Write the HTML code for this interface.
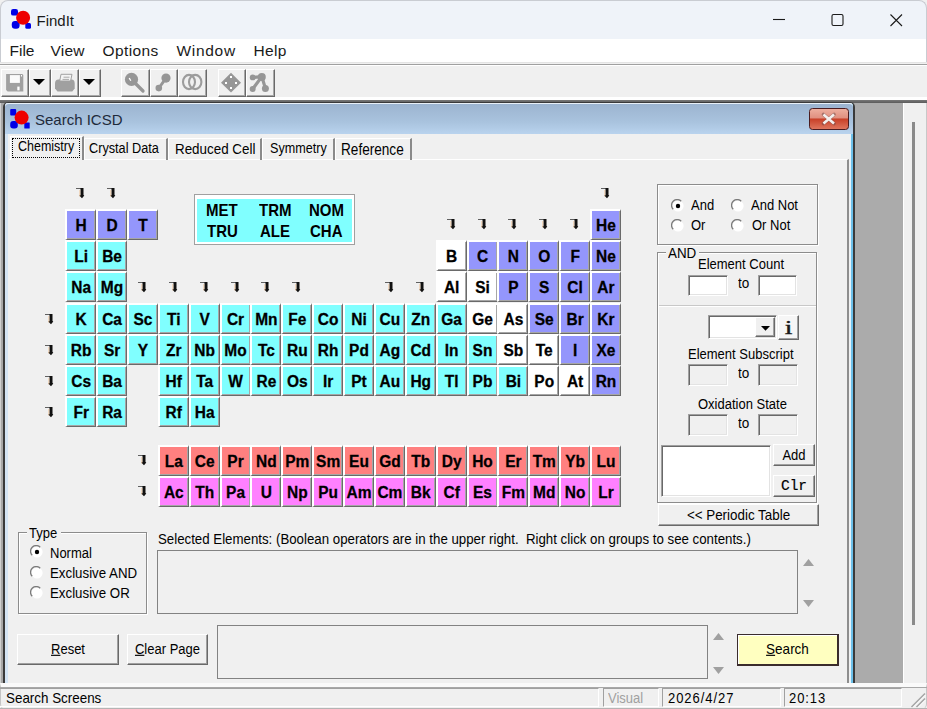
<!DOCTYPE html>
<html><head><meta charset="utf-8">
<style>
*{box-sizing:border-box;margin:0;padding:0}
html,body{width:927px;height:709px;overflow:hidden;background:#f0f0f0;font-family:"Liberation Sans",sans-serif;font-size:13px;color:#000}
.a{position:absolute}
.t{position:absolute;white-space:nowrap;line-height:1;transform:scaleY(1.15);transform-origin:0 55%}
/* title bar */
#title{left:0;top:0;width:927px;height:39px;background:#eff3f9;border-top-left-radius:8px;border-top-right-radius:8px;border:1px solid #c9ccd2;border-bottom:none}
#menu{left:0;top:39px;width:927px;height:23px;background:#fff;border-left:1px solid #c9ccd2;border-right:1px solid #c9ccd2}
.mi{position:absolute;top:42.5px;font-size:15.5px;line-height:1;color:#1a1a1a}
#tbar{left:0;top:62px;width:927px;height:40px;background:#f0f0f0}
.tb{position:absolute;top:69px;height:28px;border-top:1px solid #fff;border-left:1px solid #fff;border-right:1px solid #6a6a6a;border-bottom:1px solid #6a6a6a;box-shadow:inset -1px -1px 0 #a8a8a8}
/* mdi */
#mdi{left:0;top:103px;width:903px;height:580px;background:#ababab}
#rstrip{left:903px;top:103px;width:24px;height:580px;background:#f0f0f0;border-left:1px solid #fff;border-right:1px solid #c8c8c8}
#child{left:3px;top:102px;width:852px;height:600px;background:#f0f0f0;border:2px solid #3a3a3a;border-top-width:1px;border-top-left-radius:5px;border-top-right-radius:5px;border-bottom:none}
#child:before{content:"";position:absolute;left:0;top:0;right:0;bottom:0;border:3px solid #d4e4f4;border-bottom:none;border-right:2px solid #6cc0ea;box-shadow:inset -1px 0 0 #e4f2fa;border-top-left-radius:3px;border-top-right-radius:3px}
#ctitle{left:5px;top:103px;width:848px;height:31px;background:linear-gradient(#9cb4d0,#a9c3de 60%,#b9d3ee);border-top-left-radius:4px;border-top-right-radius:4px;border-top:1px solid #e8f0f8}
.tab{position:absolute;height:22px;top:138px;border-top:1px solid #fff;border-left:1px solid #fff;border-right:2px solid #8a8a8a}
#page{left:9px;top:159px;width:840px;height:530px;border-top:1px solid #fff;border-right:2px solid #8e8e8e}
.el{position:absolute;width:31px;height:31px;border-top:2px solid #fff;border-left:2px solid #fff;border-right:1px solid #6a6a6a;border-bottom:1px solid #6a6a6a;box-shadow:inset -1px -1px 0 #a6a6a6;font-weight:bold;font-size:15.5px;line-height:29px;text-align:center;color:#000}
.el span{display:inline-block;transform:scaleY(1.07);-webkit-text-stroke:0.25px #000}
.ar{position:absolute}
.grp{position:absolute;border:1px solid #8c8c8c;box-shadow:inset 1px 1px 0 #fff,1px 1px 0 #fff}
.sunk{position:absolute;background:#fff;border-top:1px solid #a0a0a0;border-left:1px solid #a0a0a0;border-right:1px solid #fff;border-bottom:1px solid #fff;box-shadow:inset 1px 1px 0 #696969,inset -1px -1px 0 #e3e3e3}
.dis{background:#f0f0f0}
.btn{position:absolute;border-top:1px solid #fff;border-left:1px solid #fff;border-right:1px solid #696969;border-bottom:1px solid #696969;box-shadow:inset -1px -1px 0 #a0a0a0;text-align:center;background:#f0f0f0}
.rad{position:absolute;width:13px;height:13px}
.bt{display:inline-block;transform:scaleY(1.15)}
.sp{position:absolute;border-top:1px solid #a0a0a0;border-left:1px solid #a0a0a0;border-right:1px solid #fff;border-bottom:1px solid #fff}
</style></head><body>
<!-- title bar -->
<div id="title" class="a"></div>
<svg class="a" style="left:10px;top:9px" width="22" height="21" viewBox="0 0 22 21">
<rect x="1" y="0" width="7" height="6.6" rx="2.2" fill="#0000e6"/><rect x="1.8" y="12" width="7.8" height="7.7" rx="3.2" fill="#0000e6"/><rect x="15.3" y="14" width="5.7" height="5.7" rx="1.5" fill="#0000e6"/><circle cx="13.1" cy="8.8" r="7" fill="#ee0000"/></svg>
<div class="t" style="left:36.5px;top:13px;font-size:15px;color:#1a1a1a;transform:none">FindIt</div>
<svg class="a" style="left:770px;top:12px" width="140" height="16" viewBox="0 0 140 16">
<path d="M3 7.5H15" stroke="#1a1a1a" stroke-width="1.1"/>
<rect x="62" y="2.5" width="11" height="11" rx="1.5" fill="none" stroke="#1a1a1a" stroke-width="1.1"/>
<path d="M120.5 2.5L132 14M132 2.5L120.5 14" stroke="#1a1a1a" stroke-width="1.1"/></svg>
<!-- menu -->
<div id="menu" class="a"></div>
<div class="mi" style="left:9.5px">File</div>
<div class="mi" style="left:50.5px;letter-spacing:0.2px">View</div>
<div class="mi" style="left:102.5px;letter-spacing:0.4px">Options</div>
<div class="mi" style="left:176.5px;letter-spacing:0.7px">Window</div>
<div class="mi" style="left:253.5px;letter-spacing:0.3px">Help</div>
<!-- toolbar -->
<div id="tbar" class="a"></div>
<div class="a" style="left:0;top:62px;width:927px;height:1px;background:#e4e4e4"></div>
<div class="a" style="left:0;top:64px;width:927px;height:1px;background:#a0a0a0"></div>
<div class="a" style="left:0;top:65px;width:927px;height:1px;background:#fff"></div>
<div class="tb" style="left:1px;width:28px"></div>
<div class="tb" style="left:29px;width:22px"></div>
<div class="tb" style="left:51px;width:28px"></div>
<div class="tb" style="left:79px;width:22px"></div>
<div class="tb" style="left:121px;width:29px"></div>
<div class="tb" style="left:150px;width:28px"></div>
<div class="tb" style="left:178px;width:29px"></div>
<div class="tb" style="left:217.5px;width:28px"></div>
<div class="tb" style="left:246px;width:29px"></div>
<svg class="a" style="left:0;top:66px" width="290" height="32" viewBox="0 66 290 32">
<!-- floppy -->
<path d="M6.1 74H22.3L23.3 75V91.4H7.6L6.1 89.9Z" fill="#a0a0a0"/><rect x="9.9" y="75.1" width="10" height="7.8" fill="#fafafa"/><rect x="17.3" y="86.6" width="2.3" height="3.8" fill="#fff"/><rect x="21" y="75" width="1" height="1.5" fill="#fff"/>
<path d="M33 79H45L39 85Z" fill="#000"/>
<!-- printer -->
<path d="M55 83.5Q55 79.6 58.5 79.6H71.5Q74.7 79.6 74.7 83.5V88.5L72.3 91.4H57.5L55 88.5Z" fill="#a0a0a0"/><path d="M61 74.3H72L70.6 81H59.7Z" fill="#f4f4f4" stroke="#a0a0a0" stroke-width="1"/><path d="M63.5 77.2H69.5M62.5 79.4H69" stroke="#a0a0a0" stroke-width="0.9"/>
<path d="M83 79H95L89 85Z" fill="#000"/>
<!-- magnifier -->
<circle cx="131.5" cy="79.4" r="6.6" fill="#969696"/><path d="M135.5 83.5L143 91" stroke="#969696" stroke-width="3.3" stroke-linecap="round"/><path d="M129.2 78L130.8 80.8" stroke="#fff" stroke-width="1.3"/>
<!-- bond -->
<circle cx="166" cy="78.1" r="4.6" fill="#969696"/><circle cx="158.8" cy="88.1" r="3.3" fill="#969696"/><path d="M158.8 88.1L166 78.1" stroke="#969696" stroke-width="2.8"/>
<!-- rings -->
<ellipse cx="189" cy="82" rx="6" ry="7.1" fill="none" stroke="#9c9c9c" stroke-width="2.1"/><ellipse cx="195.2" cy="82" rx="6.2" ry="7.1" fill="none" stroke="#9c9c9c" stroke-width="2.1"/>
<!-- diamond -->
<path d="M231 72.8L241 82.7L231 92.6L221 82.7Z" fill="#969696"/><rect x="230" y="76" width="2" height="2" fill="#fff"/><rect x="225" y="82" width="2" height="2" fill="#fff"/><rect x="235" y="82" width="2" height="2" fill="#fff"/><rect x="230" y="87" width="2" height="2" fill="#fff"/>
<!-- graph -->
<path d="M252.7 77.6L261.8 76.6L265.4 88.4M261.8 76.6L252.7 89" fill="none" stroke="#969696" stroke-width="3.2"/><circle cx="252.7" cy="77.4" r="2.9" fill="#969696"/><circle cx="261.8" cy="77" r="4" fill="#969696"/><circle cx="265.4" cy="88.4" r="3.5" fill="#969696"/><circle cx="252.7" cy="89" r="3" fill="#969696"/>
</svg>
<div class="a" style="left:0;top:97px;width:927px;height:3px;background:#fff"></div>
<div class="a" style="left:0;top:100px;width:927px;height:3px;background:linear-gradient(#787878,#5a5a5a)"></div>
<!-- MDI -->
<div id="mdi" class="a"></div>
<div id="rstrip" class="a"></div>
<div class="a" style="left:912px;top:122px;width:3px;height:503px;background:#8a8a8a"></div>
<div class="a" style="left:0;top:103px;width:3px;height:580px;background:#a8a8a8;border-left:1px solid #d0d0d0"></div>
<div id="child" class="a"></div>
<div id="ctitle" class="a"></div>
<svg class="a" style="left:10px;top:109px" width="21" height="21" viewBox="0 0 21 21">
<rect x="0.2" y="0" width="6" height="6.5" rx="1" fill="#0000e6"/><rect x="0.2" y="12" width="7.6" height="7.4" rx="3" fill="#0000e6"/><rect x="14.3" y="13.5" width="5.4" height="5.9" rx="0.5" fill="#0000e6"/><circle cx="11.6" cy="8.6" r="7" fill="#ee0000"/></svg>
<div class="t" style="left:35px;top:112px;font-size:15px;color:#1e2a3a;transform:none">Search ICSD</div>
<svg class="a" style="left:809px;top:108px" width="40" height="22" viewBox="0 0 40 22">
<defs><linearGradient id="cg" x1="0" y1="0" x2="0" y2="1"><stop offset="0" stop-color="#eeb0a0"/><stop offset="0.45" stop-color="#e09080"/><stop offset="0.5" stop-color="#c84028"/><stop offset="1" stop-color="#e07860"/></linearGradient></defs>
<rect x="0.5" y="0.5" width="39" height="21" rx="3" fill="url(#cg)" stroke="#4a1c20"/>
<path d="M14.5 6.5L25 15.5M25 6.5L14.5 15.5" stroke="#6a4a48" stroke-width="3.6" stroke-linecap="round" opacity="0.5"/><path d="M14.5 6.5L25 15.5M25 6.5L14.5 15.5" stroke="#f4f0ee" stroke-width="2.6"/></svg>
<!-- tab page -->
<div id="page" class="a"></div>
<div class="tab" style="left:10px;top:136px;height:24px;width:74px;background:#f0f0f0"></div>
<div class="a" style="left:12px;top:138px;width:68px;height:20px;border:1px dotted #000"></div>
<div class="t" style="left:18px;top:141px;font-size:12.5px">Chemistry</div>
<div class="tab" style="left:84px;width:84px"></div>
<div class="t" style="left:89px;top:143px;font-size:12.7px">Crystal Data</div>
<div class="tab" style="left:168px;width:94px"></div>
<div class="t" style="left:175px;top:142px;font-size:13.4px">Reduced Cell</div>
<div class="tab" style="left:262px;width:73px"></div>
<div class="t" style="left:270px;top:143px;font-size:12.6px">Symmetry</div>
<div class="tab" style="left:335px;width:77px"></div>
<div class="t" style="left:341px;top:142.5px;font-size:13.6px">Reference</div>

<div class="el" style="left:65.2px;top:209.0px;background:#9496fc"><span>H</span></div>
<div class="el" style="left:96.07px;top:209.0px;background:#9496fc"><span>D</span></div>
<div class="el" style="left:126.94px;top:209.0px;background:#9496fc"><span>T</span></div>
<div class="el" style="left:589.99px;top:209.0px;background:#9496fc"><span>He</span></div>
<div class="el" style="left:65.2px;top:240.23px;background:#80ffff"><span>Li</span></div>
<div class="el" style="left:96.07px;top:240.23px;background:#80ffff"><span>Be</span></div>
<div class="el" style="left:435.64px;top:240.23px;background:#ffffff"><span>B</span></div>
<div class="el" style="left:466.51px;top:240.23px;background:#9496fc"><span>C</span></div>
<div class="el" style="left:497.38px;top:240.23px;background:#9496fc"><span>N</span></div>
<div class="el" style="left:528.25px;top:240.23px;background:#9496fc"><span>O</span></div>
<div class="el" style="left:559.12px;top:240.23px;background:#9496fc"><span>F</span></div>
<div class="el" style="left:589.99px;top:240.23px;background:#9496fc"><span>Ne</span></div>
<div class="el" style="left:65.2px;top:271.46px;background:#80ffff"><span>Na</span></div>
<div class="el" style="left:96.07px;top:271.46px;background:#80ffff"><span>Mg</span></div>
<div class="el" style="left:435.64px;top:271.46px;background:#ffffff"><span>Al</span></div>
<div class="el" style="left:466.51px;top:271.46px;background:#ffffff"><span>Si</span></div>
<div class="el" style="left:497.38px;top:271.46px;background:#9496fc"><span>P</span></div>
<div class="el" style="left:528.25px;top:271.46px;background:#9496fc"><span>S</span></div>
<div class="el" style="left:559.12px;top:271.46px;background:#9496fc"><span>Cl</span></div>
<div class="el" style="left:589.99px;top:271.46px;background:#9496fc"><span>Ar</span></div>
<div class="el" style="left:65.2px;top:302.69px;background:#80ffff"><span>K</span></div>
<div class="el" style="left:96.07px;top:302.69px;background:#80ffff"><span>Ca</span></div>
<div class="el" style="left:126.94px;top:302.69px;background:#80ffff"><span>Sc</span></div>
<div class="el" style="left:157.81px;top:302.69px;background:#80ffff"><span>Ti</span></div>
<div class="el" style="left:188.68px;top:302.69px;background:#80ffff"><span>V</span></div>
<div class="el" style="left:219.55px;top:302.69px;background:#80ffff"><span>Cr</span></div>
<div class="el" style="left:250.42px;top:302.69px;background:#80ffff"><span>Mn</span></div>
<div class="el" style="left:281.29px;top:302.69px;background:#80ffff"><span>Fe</span></div>
<div class="el" style="left:312.16px;top:302.69px;background:#80ffff"><span>Co</span></div>
<div class="el" style="left:343.03px;top:302.69px;background:#80ffff"><span>Ni</span></div>
<div class="el" style="left:373.9px;top:302.69px;background:#80ffff"><span>Cu</span></div>
<div class="el" style="left:404.77px;top:302.69px;background:#80ffff"><span>Zn</span></div>
<div class="el" style="left:435.64px;top:302.69px;background:#80ffff"><span>Ga</span></div>
<div class="el" style="left:466.51px;top:302.69px;background:#ffffff"><span>Ge</span></div>
<div class="el" style="left:497.38px;top:302.69px;background:#ffffff"><span>As</span></div>
<div class="el" style="left:528.25px;top:302.69px;background:#9496fc"><span>Se</span></div>
<div class="el" style="left:559.12px;top:302.69px;background:#9496fc"><span>Br</span></div>
<div class="el" style="left:589.99px;top:302.69px;background:#9496fc"><span>Kr</span></div>
<div class="el" style="left:65.2px;top:333.92px;background:#80ffff"><span>Rb</span></div>
<div class="el" style="left:96.07px;top:333.92px;background:#80ffff"><span>Sr</span></div>
<div class="el" style="left:126.94px;top:333.92px;background:#80ffff"><span>Y</span></div>
<div class="el" style="left:157.81px;top:333.92px;background:#80ffff"><span>Zr</span></div>
<div class="el" style="left:188.68px;top:333.92px;background:#80ffff"><span>Nb</span></div>
<div class="el" style="left:219.55px;top:333.92px;background:#80ffff"><span>Mo</span></div>
<div class="el" style="left:250.42px;top:333.92px;background:#80ffff"><span>Tc</span></div>
<div class="el" style="left:281.29px;top:333.92px;background:#80ffff"><span>Ru</span></div>
<div class="el" style="left:312.16px;top:333.92px;background:#80ffff"><span>Rh</span></div>
<div class="el" style="left:343.03px;top:333.92px;background:#80ffff"><span>Pd</span></div>
<div class="el" style="left:373.9px;top:333.92px;background:#80ffff"><span>Ag</span></div>
<div class="el" style="left:404.77px;top:333.92px;background:#80ffff"><span>Cd</span></div>
<div class="el" style="left:435.64px;top:333.92px;background:#80ffff"><span>In</span></div>
<div class="el" style="left:466.51px;top:333.92px;background:#80ffff"><span>Sn</span></div>
<div class="el" style="left:497.38px;top:333.92px;background:#ffffff"><span>Sb</span></div>
<div class="el" style="left:528.25px;top:333.92px;background:#ffffff"><span>Te</span></div>
<div class="el" style="left:559.12px;top:333.92px;background:#9496fc"><span>I</span></div>
<div class="el" style="left:589.99px;top:333.92px;background:#9496fc"><span>Xe</span></div>
<div class="el" style="left:65.2px;top:365.15px;background:#80ffff"><span>Cs</span></div>
<div class="el" style="left:96.07px;top:365.15px;background:#80ffff"><span>Ba</span></div>
<div class="el" style="left:157.81px;top:365.15px;background:#80ffff"><span>Hf</span></div>
<div class="el" style="left:188.68px;top:365.15px;background:#80ffff"><span>Ta</span></div>
<div class="el" style="left:219.55px;top:365.15px;background:#80ffff"><span>W</span></div>
<div class="el" style="left:250.42px;top:365.15px;background:#80ffff"><span>Re</span></div>
<div class="el" style="left:281.29px;top:365.15px;background:#80ffff"><span>Os</span></div>
<div class="el" style="left:312.16px;top:365.15px;background:#80ffff"><span>Ir</span></div>
<div class="el" style="left:343.03px;top:365.15px;background:#80ffff"><span>Pt</span></div>
<div class="el" style="left:373.9px;top:365.15px;background:#80ffff"><span>Au</span></div>
<div class="el" style="left:404.77px;top:365.15px;background:#80ffff"><span>Hg</span></div>
<div class="el" style="left:435.64px;top:365.15px;background:#80ffff"><span>Tl</span></div>
<div class="el" style="left:466.51px;top:365.15px;background:#80ffff"><span>Pb</span></div>
<div class="el" style="left:497.38px;top:365.15px;background:#80ffff"><span>Bi</span></div>
<div class="el" style="left:528.25px;top:365.15px;background:#ffffff"><span>Po</span></div>
<div class="el" style="left:559.12px;top:365.15px;background:#ffffff"><span>At</span></div>
<div class="el" style="left:589.99px;top:365.15px;background:#9496fc"><span>Rn</span></div>
<div class="el" style="left:65.2px;top:396.38px;background:#80ffff"><span>Fr</span></div>
<div class="el" style="left:96.07px;top:396.38px;background:#80ffff"><span>Ra</span></div>
<div class="el" style="left:157.81px;top:396.38px;background:#80ffff"><span>Rf</span></div>
<div class="el" style="left:188.68px;top:396.38px;background:#80ffff"><span>Ha</span></div>
<div class="el" style="left:157.81px;top:444.6px;background:#ff8080"><span>La</span></div>
<div class="el" style="left:188.68px;top:444.6px;background:#ff8080"><span>Ce</span></div>
<div class="el" style="left:219.55px;top:444.6px;background:#ff8080"><span>Pr</span></div>
<div class="el" style="left:250.42px;top:444.6px;background:#ff8080"><span>Nd</span></div>
<div class="el" style="left:281.29px;top:444.6px;background:#ff8080"><span>Pm</span></div>
<div class="el" style="left:312.16px;top:444.6px;background:#ff8080"><span>Sm</span></div>
<div class="el" style="left:343.03px;top:444.6px;background:#ff8080"><span>Eu</span></div>
<div class="el" style="left:373.9px;top:444.6px;background:#ff8080"><span>Gd</span></div>
<div class="el" style="left:404.77px;top:444.6px;background:#ff8080"><span>Tb</span></div>
<div class="el" style="left:435.64px;top:444.6px;background:#ff8080"><span>Dy</span></div>
<div class="el" style="left:466.51px;top:444.6px;background:#ff8080"><span>Ho</span></div>
<div class="el" style="left:497.38px;top:444.6px;background:#ff8080"><span>Er</span></div>
<div class="el" style="left:528.25px;top:444.6px;background:#ff8080"><span>Tm</span></div>
<div class="el" style="left:559.12px;top:444.6px;background:#ff8080"><span>Yb</span></div>
<div class="el" style="left:589.99px;top:444.6px;background:#ff8080"><span>Lu</span></div>
<div class="el" style="left:157.81px;top:475.8px;background:#ff80ff"><span>Ac</span></div>
<div class="el" style="left:188.68px;top:475.8px;background:#ff80ff"><span>Th</span></div>
<div class="el" style="left:219.55px;top:475.8px;background:#ff80ff"><span>Pa</span></div>
<div class="el" style="left:250.42px;top:475.8px;background:#ff80ff"><span>U</span></div>
<div class="el" style="left:281.29px;top:475.8px;background:#ff80ff"><span>Np</span></div>
<div class="el" style="left:312.16px;top:475.8px;background:#ff80ff"><span>Pu</span></div>
<div class="el" style="left:343.03px;top:475.8px;background:#ff80ff"><span>Am</span></div>
<div class="el" style="left:373.9px;top:475.8px;background:#ff80ff"><span>Cm</span></div>
<div class="el" style="left:404.77px;top:475.8px;background:#ff80ff"><span>Bk</span></div>
<div class="el" style="left:435.64px;top:475.8px;background:#ff80ff"><span>Cf</span></div>
<div class="el" style="left:466.51px;top:475.8px;background:#ff80ff"><span>Es</span></div>
<div class="el" style="left:497.38px;top:475.8px;background:#ff80ff"><span>Fm</span></div>
<div class="el" style="left:528.25px;top:475.8px;background:#ff80ff"><span>Md</span></div>
<div class="el" style="left:559.12px;top:475.8px;background:#ff80ff"><span>No</span></div>
<div class="el" style="left:589.99px;top:475.8px;background:#ff80ff"><span>Lr</span></div>
<svg class="ar" style="left:75px;top:188px" width="10" height="11" viewBox="0 0 10 11"><path d="M1 0.5H8" stroke="#606060" stroke-width="1"/><path d="M5.5 0H8.5V7L9.3 7.6L7 10.3L4.2 7.6L5.5 7Z" fill="#111"/><path d="M4.8 2V8.5" stroke="#f0c090" stroke-width="1" opacity="0.7"/></svg>
<svg class="ar" style="left:106px;top:188px" width="10" height="11" viewBox="0 0 10 11"><path d="M1 0.5H8" stroke="#606060" stroke-width="1"/><path d="M5.5 0H8.5V7L9.3 7.6L7 10.3L4.2 7.6L5.5 7Z" fill="#111"/><path d="M4.8 2V8.5" stroke="#f0c090" stroke-width="1" opacity="0.7"/></svg>
<svg class="ar" style="left:600px;top:188px" width="10" height="11" viewBox="0 0 10 11"><path d="M1 0.5H8" stroke="#606060" stroke-width="1"/><path d="M5.5 0H8.5V7L9.3 7.6L7 10.3L4.2 7.6L5.5 7Z" fill="#111"/><path d="M4.8 2V8.5" stroke="#f0c090" stroke-width="1" opacity="0.7"/></svg>
<svg class="ar" style="left:446px;top:219px" width="10" height="11" viewBox="0 0 10 11"><path d="M1 0.5H8" stroke="#606060" stroke-width="1"/><path d="M5.5 0H8.5V7L9.3 7.6L7 10.3L4.2 7.6L5.5 7Z" fill="#111"/><path d="M4.8 2V8.5" stroke="#f0c090" stroke-width="1" opacity="0.7"/></svg>
<svg class="ar" style="left:477px;top:219px" width="10" height="11" viewBox="0 0 10 11"><path d="M1 0.5H8" stroke="#606060" stroke-width="1"/><path d="M5.5 0H8.5V7L9.3 7.6L7 10.3L4.2 7.6L5.5 7Z" fill="#111"/><path d="M4.8 2V8.5" stroke="#f0c090" stroke-width="1" opacity="0.7"/></svg>
<svg class="ar" style="left:507px;top:219px" width="10" height="11" viewBox="0 0 10 11"><path d="M1 0.5H8" stroke="#606060" stroke-width="1"/><path d="M5.5 0H8.5V7L9.3 7.6L7 10.3L4.2 7.6L5.5 7Z" fill="#111"/><path d="M4.8 2V8.5" stroke="#f0c090" stroke-width="1" opacity="0.7"/></svg>
<svg class="ar" style="left:538px;top:219px" width="10" height="11" viewBox="0 0 10 11"><path d="M1 0.5H8" stroke="#606060" stroke-width="1"/><path d="M5.5 0H8.5V7L9.3 7.6L7 10.3L4.2 7.6L5.5 7Z" fill="#111"/><path d="M4.8 2V8.5" stroke="#f0c090" stroke-width="1" opacity="0.7"/></svg>
<svg class="ar" style="left:569px;top:219px" width="10" height="11" viewBox="0 0 10 11"><path d="M1 0.5H8" stroke="#606060" stroke-width="1"/><path d="M5.5 0H8.5V7L9.3 7.6L7 10.3L4.2 7.6L5.5 7Z" fill="#111"/><path d="M4.8 2V8.5" stroke="#f0c090" stroke-width="1" opacity="0.7"/></svg>
<svg class="ar" style="left:137px;top:282px" width="10" height="11" viewBox="0 0 10 11"><path d="M1 0.5H8" stroke="#606060" stroke-width="1"/><path d="M5.5 0H8.5V7L9.3 7.6L7 10.3L4.2 7.6L5.5 7Z" fill="#111"/><path d="M4.8 2V8.5" stroke="#f0c090" stroke-width="1" opacity="0.7"/></svg>
<svg class="ar" style="left:168px;top:282px" width="10" height="11" viewBox="0 0 10 11"><path d="M1 0.5H8" stroke="#606060" stroke-width="1"/><path d="M5.5 0H8.5V7L9.3 7.6L7 10.3L4.2 7.6L5.5 7Z" fill="#111"/><path d="M4.8 2V8.5" stroke="#f0c090" stroke-width="1" opacity="0.7"/></svg>
<svg class="ar" style="left:199px;top:282px" width="10" height="11" viewBox="0 0 10 11"><path d="M1 0.5H8" stroke="#606060" stroke-width="1"/><path d="M5.5 0H8.5V7L9.3 7.6L7 10.3L4.2 7.6L5.5 7Z" fill="#111"/><path d="M4.8 2V8.5" stroke="#f0c090" stroke-width="1" opacity="0.7"/></svg>
<svg class="ar" style="left:230px;top:282px" width="10" height="11" viewBox="0 0 10 11"><path d="M1 0.5H8" stroke="#606060" stroke-width="1"/><path d="M5.5 0H8.5V7L9.3 7.6L7 10.3L4.2 7.6L5.5 7Z" fill="#111"/><path d="M4.8 2V8.5" stroke="#f0c090" stroke-width="1" opacity="0.7"/></svg>
<svg class="ar" style="left:260px;top:282px" width="10" height="11" viewBox="0 0 10 11"><path d="M1 0.5H8" stroke="#606060" stroke-width="1"/><path d="M5.5 0H8.5V7L9.3 7.6L7 10.3L4.2 7.6L5.5 7Z" fill="#111"/><path d="M4.8 2V8.5" stroke="#f0c090" stroke-width="1" opacity="0.7"/></svg>
<svg class="ar" style="left:291px;top:282px" width="10" height="11" viewBox="0 0 10 11"><path d="M1 0.5H8" stroke="#606060" stroke-width="1"/><path d="M5.5 0H8.5V7L9.3 7.6L7 10.3L4.2 7.6L5.5 7Z" fill="#111"/><path d="M4.8 2V8.5" stroke="#f0c090" stroke-width="1" opacity="0.7"/></svg>
<svg class="ar" style="left:384px;top:282px" width="10" height="11" viewBox="0 0 10 11"><path d="M1 0.5H8" stroke="#606060" stroke-width="1"/><path d="M5.5 0H8.5V7L9.3 7.6L7 10.3L4.2 7.6L5.5 7Z" fill="#111"/><path d="M4.8 2V8.5" stroke="#f0c090" stroke-width="1" opacity="0.7"/></svg>
<svg class="ar" style="left:415px;top:282px" width="10" height="11" viewBox="0 0 10 11"><path d="M1 0.5H8" stroke="#606060" stroke-width="1"/><path d="M5.5 0H8.5V7L9.3 7.6L7 10.3L4.2 7.6L5.5 7Z" fill="#111"/><path d="M4.8 2V8.5" stroke="#f0c090" stroke-width="1" opacity="0.7"/></svg>
<svg class="ar" style="left:44px;top:314px" width="10" height="11" viewBox="0 0 10 11"><path d="M1 0.5H8" stroke="#606060" stroke-width="1"/><path d="M5.5 0H8.5V7L9.3 7.6L7 10.3L4.2 7.6L5.5 7Z" fill="#111"/><path d="M4.8 2V8.5" stroke="#f0c090" stroke-width="1" opacity="0.7"/></svg>
<svg class="ar" style="left:44px;top:345px" width="10" height="11" viewBox="0 0 10 11"><path d="M1 0.5H8" stroke="#606060" stroke-width="1"/><path d="M5.5 0H8.5V7L9.3 7.6L7 10.3L4.2 7.6L5.5 7Z" fill="#111"/><path d="M4.8 2V8.5" stroke="#f0c090" stroke-width="1" opacity="0.7"/></svg>
<svg class="ar" style="left:44px;top:376px" width="10" height="11" viewBox="0 0 10 11"><path d="M1 0.5H8" stroke="#606060" stroke-width="1"/><path d="M5.5 0H8.5V7L9.3 7.6L7 10.3L4.2 7.6L5.5 7Z" fill="#111"/><path d="M4.8 2V8.5" stroke="#f0c090" stroke-width="1" opacity="0.7"/></svg>
<svg class="ar" style="left:44px;top:407px" width="10" height="11" viewBox="0 0 10 11"><path d="M1 0.5H8" stroke="#606060" stroke-width="1"/><path d="M5.5 0H8.5V7L9.3 7.6L7 10.3L4.2 7.6L5.5 7Z" fill="#111"/><path d="M4.8 2V8.5" stroke="#f0c090" stroke-width="1" opacity="0.7"/></svg>
<svg class="ar" style="left:137px;top:455px" width="10" height="11" viewBox="0 0 10 11"><path d="M1 0.5H8" stroke="#606060" stroke-width="1"/><path d="M5.5 0H8.5V7L9.3 7.6L7 10.3L4.2 7.6L5.5 7Z" fill="#111"/><path d="M4.8 2V8.5" stroke="#f0c090" stroke-width="1" opacity="0.7"/></svg>
<svg class="ar" style="left:137px;top:486px" width="10" height="11" viewBox="0 0 10 11"><path d="M1 0.5H8" stroke="#606060" stroke-width="1"/><path d="M5.5 0H8.5V7L9.3 7.6L7 10.3L4.2 7.6L5.5 7Z" fill="#111"/><path d="M4.8 2V8.5" stroke="#f0c090" stroke-width="1" opacity="0.7"/></svg>

<!-- MET box -->
<div class="a" style="left:194px;top:194px;width:161px;height:51px;border:1px solid #a0a0a0;background:#80ffff;box-shadow:inset 0 0 0 2px #fff,inset 0 4px 0 0 #fff"></div>
<div class="t" style="left:206px;top:203px;font-weight:bold;font-size:15px;transform:scaleY(1.14);transform-origin:0 80%">MET</div>
<div class="t" style="left:259px;top:203px;font-weight:bold;font-size:15px;transform:scaleY(1.14);transform-origin:0 80%">TRM</div>
<div class="t" style="left:309px;top:203px;font-weight:bold;font-size:15px;transform:scaleY(1.14);transform-origin:0 80%">NOM</div>
<div class="t" style="left:207px;top:224px;font-weight:bold;font-size:15px;transform:scaleY(1.14);transform-origin:0 80%">TRU</div>
<div class="t" style="left:260px;top:224px;font-weight:bold;font-size:15px;transform:scaleY(1.14);transform-origin:0 80%">ALE</div>
<div class="t" style="left:310px;top:224px;font-weight:bold;font-size:15px;transform:scaleY(1.14);transform-origin:0 80%">CHA</div>

<!-- right panel -->
<div class="grp" style="left:657px;top:184px;width:161px;height:61px"></div>
<svg class="a" style="left:671px;top:198.5px" width="14" height="14" viewBox="0 0 14 14"><circle cx="7" cy="7" r="5.6" fill="#fff"/><path d="M2.2 10.2A5.6 5.6 0 0 1 10.2 2.2" fill="none" stroke="#7a7a7a" stroke-width="1.3"/><circle cx="7" cy="7" r="2.2" fill="#000"/></svg>
<svg class="a" style="left:731px;top:198.5px" width="14" height="14" viewBox="0 0 14 14"><circle cx="7" cy="7" r="5.6" fill="#fff"/><path d="M2.2 10.2A5.6 5.6 0 0 1 10.2 2.2" fill="none" stroke="#7a7a7a" stroke-width="1.3"/></svg>
<svg class="a" style="left:671px;top:218.5px" width="14" height="14" viewBox="0 0 14 14"><circle cx="7" cy="7" r="5.6" fill="#fff"/><path d="M2.2 10.2A5.6 5.6 0 0 1 10.2 2.2" fill="none" stroke="#7a7a7a" stroke-width="1.3"/></svg>
<svg class="a" style="left:731px;top:218.5px" width="14" height="14" viewBox="0 0 14 14"><circle cx="7" cy="7" r="5.6" fill="#fff"/><path d="M2.2 10.2A5.6 5.6 0 0 1 10.2 2.2" fill="none" stroke="#7a7a7a" stroke-width="1.3"/></svg>
<div class="t" style="left:691px;top:198px">And</div>
<div class="t" style="left:751px;top:198px">And Not</div>
<div class="t" style="left:691px;top:218px">Or</div>
<div class="t" style="left:752px;top:218px">Or Not</div>
<div class="grp" style="left:657px;top:252px;width:160px;height:251px"></div>
<div class="a" style="left:666px;top:246px;width:33px;height:12px;background:#f0f0f0"></div>
<div class="t" style="left:668px;top:245.5px;font-size:13.4px">AND</div>
<div class="t" style="left:698px;top:257px">Element Count</div>
<div class="sunk" style="left:688px;top:275px;width:40px;height:21px"></div>
<div class="t" style="left:738px;top:275.5px;font-size:13.5px">to</div>
<div class="sunk" style="left:758px;top:275px;width:39px;height:21px"></div>
<div class="a" style="left:659px;top:305px;width:157px;height:1px;background:#c8c8c8"></div><div class="a" style="left:659px;top:306px;width:157px;height:1px;background:#fff"></div>
<div class="sunk" style="left:708px;top:315px;width:69px;height:24px"></div>
<div class="btn" style="left:755px;top:317px;width:20px;height:20px"></div>
<svg class="a" style="left:760.5px;top:325.5px" width="10" height="6"><path d="M0 0H9L4.5 4.8Z" fill="#000"/></svg>
<div class="btn" style="left:778px;top:315px;width:21px;height:25px;font-family:'Liberation Serif',serif;font-size:19px;line-height:23px;background:#f6f6f6"><span style="display:inline-block;transform:scaleX(1.45);color:#1a1a1a;-webkit-text-stroke:0.4px #1a1a1a">i</span></div>
<div class="t" style="left:688px;top:347px">Element Subscript</div>
<div class="sunk dis" style="left:688px;top:364px;width:40px;height:22px"></div>
<div class="t" style="left:738px;top:365.5px;font-size:13.5px">to</div>
<div class="sunk dis" style="left:758px;top:364px;width:40px;height:22px"></div>
<div class="t" style="left:698px;top:397px">Oxidation State</div>
<div class="sunk dis" style="left:688px;top:414px;width:40px;height:22px"></div>
<div class="t" style="left:738px;top:415.5px;font-size:13.5px">to</div>
<div class="sunk dis" style="left:758px;top:414px;width:40px;height:22px"></div>
<div class="sunk" style="left:661px;top:445px;width:110px;height:52px"></div>
<div class="btn" style="left:773px;top:444px;width:42px;height:22px;line-height:19px"><span class="bt">Add</span></div>
<div class="btn" style="left:773px;top:475px;width:42px;height:22px;line-height:21px;font-family:'Liberation Mono',monospace;font-size:14.5px;-webkit-text-stroke:0.2px #000">Clr</div>
<div class="btn" style="left:658px;top:504px;width:161px;height:22px;line-height:19px;font-size:13.4px"><span class="bt">&lt;&lt; Periodic Table</span></div>

<!-- type group -->
<div class="grp" style="left:18px;top:532px;width:129px;height:82px"></div>
<div class="a" style="left:27px;top:525px;width:34px;height:14px;background:#f0f0f0"></div>
<div class="t" style="left:29px;top:526px">Type</div>
<svg class="a" style="left:29.5px;top:545px" width="14" height="14" viewBox="0 0 14 14"><circle cx="7" cy="7" r="5.6" fill="#fff"/><path d="M2.2 10.2A5.6 5.6 0 0 1 10.2 2.2" fill="none" stroke="#7a7a7a" stroke-width="1.3"/><circle cx="7" cy="7" r="2.2" fill="#000"/></svg>
<svg class="a" style="left:29.5px;top:566px" width="14" height="14" viewBox="0 0 14 14"><circle cx="7" cy="7" r="5.6" fill="#fff"/><path d="M2.2 10.2A5.6 5.6 0 0 1 10.2 2.2" fill="none" stroke="#7a7a7a" stroke-width="1.3"/></svg>
<svg class="a" style="left:29.5px;top:586px" width="14" height="14" viewBox="0 0 14 14"><circle cx="7" cy="7" r="5.6" fill="#fff"/><path d="M2.2 10.2A5.6 5.6 0 0 1 10.2 2.2" fill="none" stroke="#7a7a7a" stroke-width="1.3"/></svg>
<div class="t" style="left:50px;top:546px">Normal</div>
<div class="t" style="left:50px;top:566px;font-size:13.3px">Exclusive AND</div>
<div class="t" style="left:50px;top:586px;font-size:13.3px">Exclusive OR</div>
<div class="t" style="left:158px;top:532px;font-size:13.27px">Selected Elements: (Boolean operators are in the upper right.&nbsp; Right click on groups to see contents.)</div>
<div class="a" style="left:157px;top:550px;width:641px;height:64px;border:1px solid #828282"></div>
<svg class="a" style="left:802px;top:556px" width="14" height="52"><path d="M1 10H12L6.5 3Z" fill="#a0a0a0"/><path d="M1 44H12L6.5 51Z" fill="#a0a0a0"/></svg>
<div class="btn" style="left:17px;top:634px;width:102px;height:31px;line-height:28px"><span class="bt"><u>R</u>eset</span></div>
<div class="btn" style="left:127px;top:634px;width:81px;height:31px;line-height:28px"><span class="bt"><u>C</u>lear Page</span></div>
<div class="a" style="left:217px;top:625px;width:491px;height:54px;border:1px solid #828282"></div>
<svg class="a" style="left:712px;top:630px" width="14" height="46"><path d="M1 10H12L6.5 3Z" fill="#a0a0a0"/><path d="M1 37H12L6.5 44Z" fill="#a0a0a0"/></svg>
<div class="a" style="left:737px;top:634px;width:102px;height:32px;background:#ffffc0;border:2px solid #3a2c2c;border-top-width:1px;border-left-width:1px;box-shadow:inset 1px 1px 0 #fff;text-align:center;line-height:28px;font-size:13.5px"><span class="bt"><u>S</u>earch</span></div>

<!-- status bar -->
<div class="a" style="left:0;top:683px;width:927px;height:26px;background:#f0f0f0;border-top:4px solid #fafafa;border-left:1px solid #c4c4c4;border-right:1px solid #c4c4c4;border-bottom-left-radius:5px;border-bottom-right-radius:5px"></div>
<div class="a" style="left:0;top:687px;width:927px;height:1px;background:#a8a8a8"></div>
<div class="a" style="left:0;top:708px;width:927px;height:1px;background:#b4b4b4"></div>
<div class="sp" style="left:-2px;top:688px;width:601px;height:19px"></div>
<div class="t" style="left:6px;top:691px;font-size:13.4px">Search Screens</div>
<div class="sp" style="left:603px;top:688px;width:56px;height:19px"></div>
<div class="t" style="left:608px;top:691px;color:#a0a0a0">Visual</div>
<div class="sp" style="left:662px;top:688px;width:119px;height:19px"></div>
<div class="t" style="left:668px;top:691px;letter-spacing:0.95px">2026/4/27</div>
<div class="sp" style="left:784px;top:688px;width:118px;height:19px"></div>
<div class="t" style="left:789px;top:691px;letter-spacing:0.9px">20:13</div>
<svg class="a" style="left:905px;top:690px" width="22" height="19"><path d="M20 3.5L6.5 17M20 8.5L11.5 17" stroke="#a8a8a8" stroke-width="1.6"/><path d="M20.5 5L8 17.5M20.5 10L13 17.5" stroke="#fff" stroke-width="0.8"/></svg>
</body></html>
